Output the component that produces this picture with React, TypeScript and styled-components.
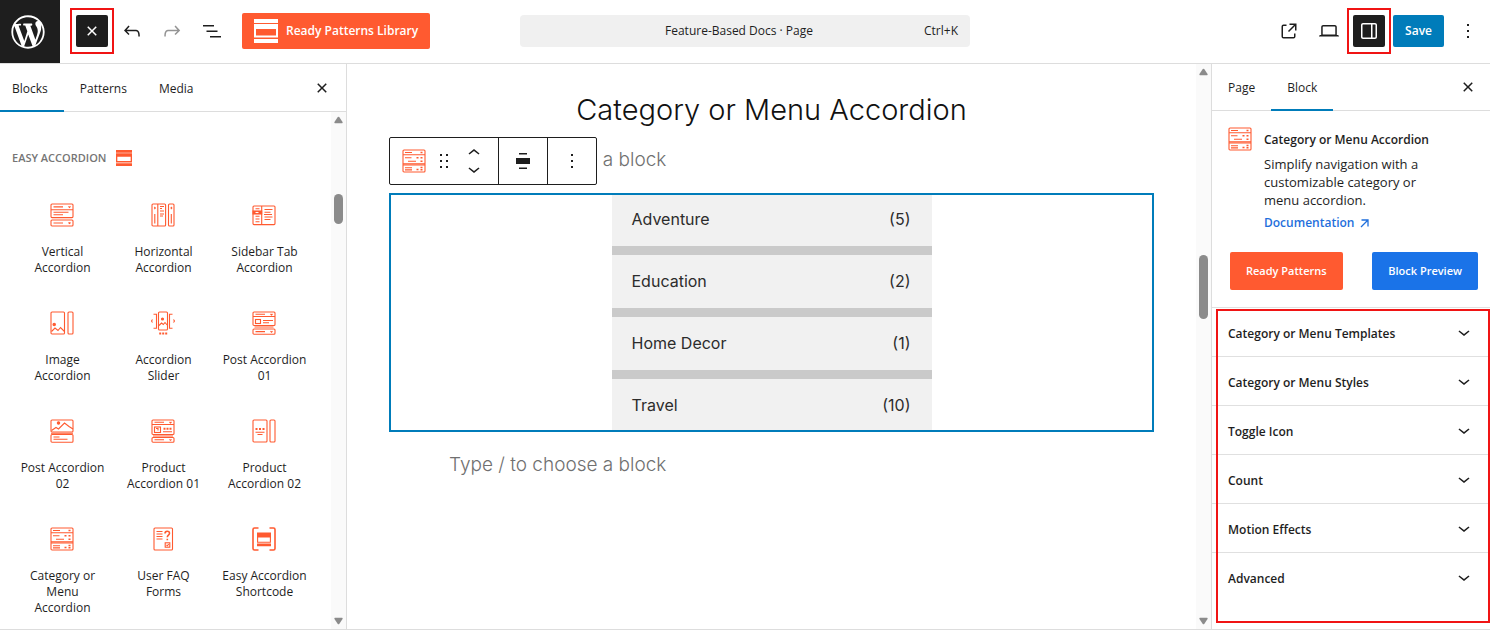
import React from 'react';
import styled, { createGlobalStyle } from 'styled-components';

const ORANGE = '#ff5a30';
const BLUE = '#007cba';
const INK = '#1e1e1e';
const LINE = '#dddddd';
const RED = '#f01414';

const GlobalStyle = createGlobalStyle`
  *, *::before, *::after { box-sizing: border-box; }
  body {
    margin: 0;
    background: #fff;
    color: ${INK};
    font-family: 'Open Sans', 'Noto Sans', sans-serif;
    font-size: 12px;
    line-height: 16px;
  }
  button { font: inherit; color: inherit; background: none; border: 0; padding: 0; cursor: pointer; }
  h1, h2, h3, p, ul { margin: 0; padding: 0; }
  ul { list-style: none; }
  svg { display: block; flex: none; }
`;

/* ---------- icons ---------- */

const GLYPHS = {
  close:
    'M12 13.06l3.712 3.713 1.061-1.06L13.061 12l3.712-3.712-1.06-1.06L12 10.938 8.288 7.227l-1.061 1.06L10.939 12l-3.712 3.712 1.06 1.061L12 13.061z',
  undo:
    'M18.3 11.7c-.6-.6-1.4-.9-2.3-.9H6.7l2.9-3.3-1.1-1-4.5 5L8.5 16l1-1-2.7-2.7H16c.5 0 .9.2 1.3.5 1 1 1 3.4 1 4.5v.3h1.5v-.2c0-1.5 0-4.3-1.5-5.7z',
  redo:
    'M15.6 6.5l-1.1 1 2.9 3.3H8c-.9 0-1.7.3-2.3.9-1.4 1.5-1.4 4.2-1.4 5.6v.2h1.5v-.3c0-1.1 0-3.5 1-4.5.3-.3.7-.5 1.3-.5h9.2L14.5 15l1.1 1.1 4.6-4.6-4.6-5z',
  listView: 'M3 6h11v1.5H3V6Zm3.5 5.5h11V13h-11v-1.5ZM21 17H10v1.5h11V17Z',
  external:
    'M19.5 4.5h-7V6h4.44l-5.97 5.97 1.06 1.06L18 7.06v4.44h1.5v-7Zm-13 1a2 2 0 0 0-2 2v10a2 2 0 0 0 2 2h10a2 2 0 0 0 2-2v-3H17v3a.5.5 0 0 1-.5.5h-10a.5.5 0 0 1-.5-.5v-10a.5.5 0 0 1 .5-.5h3V5.5h-3Z',
  desktop:
    'M20.5 16h-.7V8c0-1.1-.9-2-2-2H6.2c-1.1 0-2 .9-2 2v8h-.7c-.8 0-1.5.7-1.5 1.5h20c0-.8-.7-1.5-1.5-1.5zM5.7 8c0-.3.2-.5.5-.5h11.6c.3 0 .5.2.5.5v7.6H5.7V8z',
  drawer:
    'M18 4H6c-1.1 0-2 .9-2 2v12c0 1.1.9 2 2 2h12c1.1 0 2-.9 2-2V6c0-1.1-.9-2-2-2zm-4 14.5H6c-.3 0-.5-.2-.5-.5V6c0-.3.2-.5.5-.5h8v13zm4.5-.5c0 .3-.2.5-.5.5h-2.5v-13H18c.3 0 .5.2.5.5v12z',
  more: 'M13 19h-2v-2h2v2zm0-6h-2v-2h2v2zm0-6h-2V5h2v2z',
  chevronDown: 'M17.5 11.6L12 16l-5.5-4.4.9-1.2L12 14l4.5-3.6 1 1.2z',
  chevronUp: 'M6.5 12.4L12 8l5.5 4.4-.9 1.2L12 10l-4.5 3.6-1-1.2z',
  drag:
    'M8 7h2V5H8v2zm0 6h2v-2H8v2zm0 6h2v-2H8v2zm6-14v2h2V5h-2zm0 8h2v-2h-2v2zm0 6h2v-2h-2v2z',
  align: 'M8 4h8v1.5H8zM5 9h14v6H5zM8 18.500h8V20H8z',
};

const Glyph = ({ name }: { name: keyof typeof GLYPHS }) => (
  <svg width="24" height="24" viewBox="0 0 24 24" fill="currentColor" aria-hidden="true">
    <path d={GLYPHS[name]} />
  </svg>
);

const WordPressLogo = () => (
  <svg width="40" height="40" viewBox="-2 -2 24 24" fill="#fff" aria-hidden="true">
    <path d="M20 10c0-5.51-4.49-10-10-10C4.48 0 0 4.49 0 10c0 5.52 4.48 10 10 10 5.51 0 10-4.48 10-10zM7.78 15.37L4.37 6.22c.55-.02 1.17-.08 1.17-.08.5-.06.44-1.13-.06-1.11 0 0-1.45.11-2.37.11-.18 0-.37 0-.58-.01C4.12 2.69 6.87 1.11 10 1.11c2.33 0 4.45.87 6.05 2.34-.68-.11-1.65.39-1.65 1.58 0 .74.45 1.36.9 2.1.35.61.55 1.36.55 2.46 0 1.49-1.4 5-1.4 5l-3.03-8.37c.54-.02.82-.17.82-.17.5-.05.44-1.25-.06-1.22 0 0-1.44.12-2.38.12-.87 0-2.33-.12-2.33-.12-.5-.03-.56 1.2-.06 1.22l.92.08 1.26 3.41zM17.41 10c.24-.64.74-1.87.43-4.25.7 1.29 1.05 2.71 1.05 4.25 0 3.29-1.73 6.24-4.4 7.78.97-2.59 1.94-5.2 2.92-7.78zM6.1 18.09C3.12 16.65 1.11 13.53 1.11 10c0-1.3.23-2.48.72-3.59C3.25 10.3 4.67 14.2 6.1 18.09zm4.03-6.63l2.58 6.98c-.86.29-1.76.45-2.71.45-.79 0-1.57-.11-2.29-.33.81-2.38 1.62-4.74 2.42-7.1z" />
  </svg>
);

/* Two solid bars around a framed band. */
const BrandMark = ({ size }: { size: number }) => (
  <svg width={size} height={size} viewBox="0 0 24 24" fill="currentColor" aria-hidden="true">
    <path d="M0 0h24v4H0zM0 20h24v4H0z" />
    <path fillRule="evenodd" d="M0 5h24v13.6H0zM2 10v6.6h20V10z" />
  </svg>
);

const ART: Record<string, React.ReactNode> = {
  vertical: (
    <>
      <rect x="1" y="1" width="22" height="13.6" rx="1" />
      <path d="M1 6.8h22M3.5 3.9H13M3.5 9.3h15M3.5 11.8H13M18.5 3.4l1 1 1-1" />
      <rect x="1" y="17" width="22" height="6" rx="1" />
      <path d="M3.5 20H13M18.5 19.5l1 1 1-1" />
    </>
  ),
  horizontal: (
    <>
      <rect x="1" y="1" width="13.6" height="22" rx="1" />
      <path d="M6.8 1v22M3.8 11v9.5M9 3.5h4M9 5.5h2M9 8h4M9 11h4M9 13h3M3.3 4l1 1-1 1" />
      <rect x="17.5" y="1" width="5.5" height="22" rx="1" />
      <path d="M20.3 11v9.5M19.8 4l1 1-1 1" />
    </>
  ),
  sidebar: (
    <>
      <rect x="1" y="3" width="22" height="18.6" rx="1" />
      <path d="M9.7 3v18.6M3.5 5.8h4M3.5 13.2h4M3.5 16h4M3.5 18.8h4M12.5 6.5h8M12.5 9.2h6M12.5 14h8M12.5 16.5h6M12 11.5h8" />
      <rect x="1" y="8" width="8.7" height="3" fill={ORANGE} />
      <path d="M3.5 9.5h3" stroke="#fff" />
    </>
  ),
  image: (
    <>
      <rect x="1" y="1" width="13.5" height="22" rx="1" />
      <rect x="18" y="1" width="5" height="22" rx="1" />
      <path d="M1.5 20.5L5 17l3 2.500 2.500-3 4 4" />
      <circle cx="4.2" cy="13.5" r="1.2" fill={ORANGE} />
    </>
  ),
  slider: (
    <>
      <rect x="7.5" y="1" width="9" height="18" rx="1" />
      <path d="M8 14.5l2.5-2.5 1.8 1.5 1.7-2 2.2 2.5M2.5 3.2h3v14h-3M21.5 3.2h-3v14h3M1.5 8.5l-1 1.5 1 1.5M22.5 8.5l1 1.5-1 1.5" />
      <circle cx="11.5" cy="8" r="1" fill={ORANGE} />
      <path d="M8.2 22.5h2M11.2 22.5h2M14.2 22.5h2" strokeWidth="2" />
    </>
  ),
  post1: (
    <>
      <rect x="1" y="1" width="22" height="13.5" rx="1" />
      <path d="M1 5.5h22M3.5 3.3H13M18.5 3l1 1 1-1M11 9.5h10M11 11.8h6M2.5 16h19" />
      <rect x="3.5" y="8.5" width="5" height="4" />
      <rect x="1" y="18" width="22" height="5.2" rx="1" />
      <path d="M3.5 20.6H13M18.5 20.2l1 1 1-1" />
    </>
  ),
  post2: (
    <>
      <rect x="1" y="1" width="22" height="12" rx="1" />
      <path d="M1.5 11.5L6 8.5 8.5 10l6-6L19 7.5l4 2.500M1 14.3h22" />
      <circle cx="8.5" cy="4" r="1.2" fill={ORANGE} />
      <rect x="1" y="15.5" width="22" height="7.7" rx="1" />
      <path d="M3.5 18h6M3.5 20.2h14" />
    </>
  ),
  product1: (
    <>
      <rect x="1" y="1" width="22" height="14.5" rx="1" />
      <path d="M1 5.5h22M3.5 3.3H13M18.5 3l1 1 1-1M12 12.8h9M2 17h20" />
      <path d="M12.5 9.8h2M15.5 9.8h2M18.5 9.8h2" strokeWidth="2" />
      <rect x="3.5" y="8" width="6" height="5.5" />
      <path d="M5 9.5h2v2" />
      <rect x="1" y="18.5" width="22" height="4.7" rx="1" />
      <path d="M3.5 20.8H13M18.5 20.3l1 1 1-1" />
    </>
  ),
  product2: (
    <>
      <rect x="1" y="1" width="14" height="22" rx="1" />
      <rect x="18" y="1" width="5" height="22" rx="1" />
      <path d="M3.5 13.2h9M5.5 15.5h5" />
      <path d="M3.5 10h2M7 10h2M10.5 10h2" strokeWidth="2" />
    </>
  ),
  category: (
    <>
      <rect x="1" y="1" width="22" height="22" rx="1" />
      <path d="M1 5.8h22M1 14.8h22M1 16h22" />
      <path d="M3 3.5h7M3 8.8h6.5M6 12.2h8M3 18.7h7M3 20.9h7" />
      <path d="M14.5 8.8h2M18.5 8.8h2M18.5 12.2h2M18.5 3.5h2M14.5 20.5h2M18.5 18.5h2M18.5 20.8h2" strokeWidth="1.5" />
    </>
  ),
  faq: (
    <>
      <rect x="3" y="1" width="18.5" height="22" rx="1" />
      <path d="M5.5 4.5h6M5.5 7h6M5.5 9.5h6M5.5 12h6" />
      <path d="M14 6.5c0-3 4.5-3 4.5-.3 0 2-2.2 1.8-2.2 4M16.3 11.8v1.4" strokeWidth="1.6" />
      <rect x="14.2" y="15.8" width="4.6" height="4.4" />
      <path d="M15.5 18l.8.8 1.4-1.6" />
    </>
  ),
  shortcode: (
    <>
      <path d="M6.5 1h-4Q1 1 1 2.500v19Q1 23 2.500 23h4M17.500 1h4Q23 1 23 2.500v19q0 1.500-1.500 1.500h-4" strokeWidth="1.6" />
      <path d="M5 5.5h14v5H5zM5 16.5h14v2.700H5z" fill={ORANGE} stroke="none" />
      <path d="M5.6 10v5.2h12.8V10" />
    </>
  ),
};

const BlockArt = ({ kind }: { kind: string }) => (
  <svg width="24" height="24" viewBox="0 0 24 24" fill="none" stroke={ORANGE} strokeWidth="1.1" aria-hidden="true">
    {ART[kind]}
  </svg>
);

/* ---------- shared pieces ---------- */

const IconButton = styled.button<{ $dark?: boolean; $muted?: boolean }>`
  display: flex;
  align-items: center;
  justify-content: center;
  width: 32px;
  height: 32px;
  border-radius: 2px;
  background: ${(p) => (p.$dark ? INK : 'transparent')};
  color: ${(p) => (p.$dark ? '#fff' : p.$muted ? '#949494' : INK)};
`;

const Callout = styled.div`
  position: relative;
  &::after {
    content: '';
    position: absolute;
    inset: -7px -6px;
    border: 2px solid ${RED};
    pointer-events: none;
  }
`;

const Tabs = styled.div<{ $height: number }>`
  display: flex;
  align-items: stretch;
  height: ${(p) => p.$height}px;
  flex: none;
  border-bottom: 1px solid ${LINE};
  padding-right: 8px;
`;

const Tab = styled.button<{ $active?: boolean }>`
  position: relative;
  padding: 2px 16px 0;
  &:first-child { padding-left: 12px; }
  &::after {
    content: '';
    position: absolute;
    inset: auto 0 -1px 0;
    height: 2px;
    background: ${(p) => (p.$active ? BLUE : 'transparent')};
  }
`;

const TabClose = styled(IconButton)`
  align-self: center;
  margin-left: auto;
`;

const Track = styled.div`
  display: flex;
  flex-direction: column;
  align-items: center;
  flex: none;
  width: 15px;
  padding: 4px 0;
  background: #fafafa;
  color: #8b8b8b;
`;

const Rail = styled.div`
  flex: 1;
  width: 9px;
`;

const Thumb = styled.div`
  width: 9px;
  border-radius: 5px;
  background: #8b8b8b;
`;

const Scrollbar = ({ start, size }: { start: number; size: number }) => (
  <Track aria-hidden="true">
    <svg width="9" height="8" viewBox="0 0 10 8" fill="currentColor">
      <path d="M4.2.8Q5 0 5.800.8L9.500 6.200Q10 7.500 8.800 7.500H1.200Q0 7.500.5 6.200z" />
    </svg>
    <Rail>
      <Thumb style={{ marginTop: start, height: size }} />
    </Rail>
    <svg width="9" height="8" viewBox="0 0 10 8" fill="currentColor">
      <path d="M4.2 7.200Q5 8 5.800 7.200L9.500 1.800Q10 .5 8.800.5H1.200Q0 .5.5 1.800z" />
    </svg>
  </Track>
);

/* ---------- top bar ---------- */

const Shell = styled.div`
  display: flex;
  flex-direction: column;
  height: 100vh;
  padding-bottom: 1px;
`;

const TopBar = styled.header`
  display: grid;
  grid-template-columns: 1fr 450px 1fr;
  flex: none;
  height: 64px;
  border-bottom: 1px solid ${LINE};
`;

const BarSide = styled.div<{ $end?: boolean }>`
  display: flex;
  align-items: center;
  justify-content: ${(p) => (p.$end ? 'flex-end' : 'flex-start')};
  gap: 8px;
  height: 62px;
  padding-right: ${(p) => (p.$end ? '6px' : '0')};
`;

const HomeLink = styled.a`
  display: flex;
  align-items: center;
  align-self: flex-start;
  flex: none;
  width: 60px;
  height: 63px;
  margin-right: 8px;
  padding-left: 8px;
  background: ${INK};
`;

const LibraryButton = styled.button`
  display: flex;
  align-items: center;
  gap: 8px;
  height: 36px;
  margin-left: 6px;
  padding: 0 12px;
  border-radius: 2px;
  background: ${ORANGE};
  color: #fff;
  font-weight: 600;
  white-space: nowrap;
`;

const CommandButton = styled.button`
  display: flex;
  align-items: center;
  height: 32px;
  margin-top: 15px;
  padding-right: 12px;
  border-radius: 4px;
  background: #f0f0f0;
  &::before { content: ''; flex: 1; }
`;

const Shortcut = styled.span`
  flex: 1;
  text-align: right;
`;

const SaveButton = styled.button`
  height: 32px;
  padding: 0 12px;
  border-radius: 2px;
  background: ${BLUE};
  color: #fff;
  font-weight: 600;
`;

/* ---------- inserter ---------- */

const Body = styled.div`
  display: flex;
  flex: 1;
  min-height: 0;
  border-bottom: 1px solid ${LINE};
`;

const Inserter = styled.aside`
  display: flex;
  flex-direction: column;
  flex: none;
  width: 347px;
  border-right: 1px solid ${LINE};
`;

const Scroller = styled.div`
  display: flex;
  flex: 1;
  min-height: 0;
`;

const BlockList = styled.div`
  flex: 1;
  padding: 38px 16px 0 12px;
  overflow: hidden;
`;

const GroupTitle = styled.h2`
  display: flex;
  align-items: center;
  gap: 10px;
  margin-bottom: 25px;
  color: #757575;
  font-size: 11px;
  font-weight: 600;
  line-height: 16px;
  text-transform: uppercase;
  svg { color: ${ORANGE}; }
`;

const BlockGrid = styled.ul`
  display: grid;
  grid-template-columns: repeat(3, 101px);
  row-gap: 11px;
`;

const BlockItem = styled.button`
  display: flex;
  flex-direction: column;
  align-items: center;
  gap: 17px;
  width: 100%;
  padding: 12px 4px;
  white-space: pre-line;
  text-align: center;
  svg { margin-right: 1px; }
`;

const BLOCKS = [
  ['vertical', 'Vertical\nAccordion'],
  ['horizontal', 'Horizontal\nAccordion'],
  ['sidebar', 'Sidebar Tab\nAccordion'],
  ['image', 'Image\nAccordion'],
  ['slider', 'Accordion\nSlider'],
  ['post1', 'Post Accordion\n01'],
  ['post2', 'Post Accordion\n02'],
  ['product1', 'Product\nAccordion 01'],
  ['product2', 'Product\nAccordion 02'],
  ['category', 'Category or\nMenu\nAccordion'],
  ['faq', 'User FAQ\nForms'],
  ['shortcode', 'Easy Accordion\nShortcode'],
];

/* ---------- canvas ---------- */

const Canvas = styled.main`
  display: flex;
  flex: 1;
  min-width: 0;
`;

const Page = styled.div`
  flex: 1;
  display: flex;
  flex-direction: column;
  align-items: center;
  padding: 26px 42px 0;
  font-family: Inter, sans-serif;
`;

const PageTitle = styled.h1`
  margin-bottom: 15px;
  color: #111;
  font-size: 29px;
  font-weight: 300;
  line-height: 40px;
`;

const Prompt = styled.p`
  width: 100%;
  max-width: 645px;
  color: #707070;
  font-size: 19px;
  font-weight: 300;
  line-height: 30px;
`;

const SelectedBlock = styled.section`
  position: relative;
  display: flex;
  justify-content: center;
  width: 100%;
  max-width: 765px;
  margin: 18px 0;
  outline: 2px solid ${BLUE};
  outline-offset: -2px;
`;

const Categories = styled.ul`
  display: flex;
  flex-direction: column;
  gap: 9px;
  width: 320px;
  background: #cacaca;
`;

const Category = styled.li`
  display: flex;
  justify-content: space-between;
  padding: 16px 21px 16px 20px;
  background: #f1f1f1;
  color: #2c2c2c;
  font-size: 16px;
  line-height: 21px;
`;

const BlockToolbar = styled.div`
  position: absolute;
  left: 0;
  bottom: calc(100% + 8px);
  display: flex;
  height: 48px;
  border: 1px solid ${INK};
  border-radius: 2px;
  background: #fff;
`;

const ToolGroup = styled.div`
  display: flex;
  align-items: center;
  justify-content: center;
  min-width: 49px;
  & + & { border-left: 1px solid ${INK}; }
  &:first-child { gap: 6px; padding: 0 12px; }
`;

const ToolButton = styled.button`
  display: flex;
  justify-content: center;
  width: 24px;
`;

const Movers = styled.div`
  display: flex;
  flex-direction: column;
  button { height: 16px; display: flex; align-items: center; }
`;

const CATEGORIES = [
  ['Adventure', 5],
  ['Education', 2],
  ['Home Decor', 1],
  ['Travel', 10],
];

/* ---------- inspector ---------- */

const Inspector = styled.aside`
  display: flex;
  flex-direction: column;
  flex: none;
  width: 279px;
  border-left: 1px solid ${LINE};
  ${Tabs} { padding-right: 6px; }
  ${Tab}:first-child { padding-left: 16px; }
`;

const Card = styled.div`
  display: flex;
  gap: 12px;
  padding: 16px 16px 0;
`;

const CardText = styled.div`
  display: flex;
  flex-direction: column;
  padding-top: 3px;
`;

const CardTitle = styled.h2`
  font-size: 12px;
  font-weight: 600;
  line-height: 20px;
  white-space: nowrap;
`;

const CardCopy = styled.p`
  max-width: 160px;
  margin: 5px 0 6px;
  font-size: 13px;
  line-height: 18px;
`;

const DocLink = styled.a`
  display: flex;
  align-items: center;
  gap: 6px;
  color: #1f6fdc;
  font-weight: 600;
  text-decoration: none;
`;

const Actions = styled.div`
  display: flex;
  justify-content: space-between;
  padding: 21px 12px 17px 18px;
`;

const ActionButton = styled.button<{ $tone: string }>`
  height: 38px;
  padding: 0 16px;
  border-radius: 2px;
  background: ${(p) => p.$tone};
  color: #fff;
  font-size: 11px;
  font-weight: 600;
  white-space: nowrap;
`;

const Panels = styled.div`
  position: relative;
  &::after {
    content: '';
    position: absolute;
    inset: 2px 0 -22px 4px;
    border: 2px solid ${RED};
    pointer-events: none;
  }
`;

const PanelToggle = styled.button`
  display: flex;
  align-items: center;
  justify-content: space-between;
  width: 100%;
  height: 49px;
  padding: 0 14px 0 16px;
  border-top: 1px solid #e0e0e0;
  font-weight: 600;
  span { padding-top: 3px; }
`;

const PANELS = [
  'Category or Menu Templates',
  'Category or Menu Styles',
  'Toggle Icon',
  'Count',
  'Motion Effects',
  'Advanced',
];

export default function App() {
  return (
    <Shell>
      <GlobalStyle />
      <TopBar>
        <BarSide>
          <HomeLink href="#" aria-label="View pages">
            <WordPressLogo />
          </HomeLink>
          <Callout>
            <IconButton $dark aria-label="Close block inserter">
              <Glyph name="close" />
            </IconButton>
          </Callout>
          <IconButton aria-label="Undo"><Glyph name="undo" /></IconButton>
          <IconButton $muted aria-label="Redo"><Glyph name="redo" /></IconButton>
          <IconButton aria-label="Document overview"><Glyph name="listView" /></IconButton>
          <LibraryButton>
            <BrandMark size={24} />
            Ready Patterns Library
          </LibraryButton>
        </BarSide>
        <CommandButton>
          <span>Feature-Based Docs · Page</span>
          <Shortcut>Ctrl+K</Shortcut>
        </CommandButton>
        <BarSide $end>
          <IconButton aria-label="View page"><Glyph name="external" /></IconButton>
          <IconButton aria-label="Preview"><Glyph name="desktop" /></IconButton>
          <Callout>
            <IconButton $dark aria-label="Settings"><Glyph name="drawer" /></IconButton>
          </Callout>
          <SaveButton>Save</SaveButton>
          <IconButton aria-label="Options"><Glyph name="more" /></IconButton>
        </BarSide>
      </TopBar>

      <Body>
        <Inserter>
          <Tabs $height={48}>
            <Tab $active>Blocks</Tab>
            <Tab>Patterns</Tab>
            <Tab>Media</Tab>
            <TabClose aria-label="Close"><Glyph name="close" /></TabClose>
          </Tabs>
          <Scroller>
            <BlockList>
              <GroupTitle>
                Easy Accordion
                <BrandMark size={16} />
              </GroupTitle>
              <BlockGrid>
                {BLOCKS.map(([kind, label]) => (
                  <li key={kind}>
                    <BlockItem>
                      <BlockArt kind={kind} />
                      {label}
                    </BlockItem>
                  </li>
                ))}
              </BlockGrid>
            </BlockList>
            <Scrollbar start={70} size={30} />
          </Scroller>
        </Inserter>

        <Canvas>
          <Page>
            <PageTitle>Category or Menu Accordion</PageTitle>
            <Prompt>Type / to choose a block</Prompt>
            <SelectedBlock>
              <BlockToolbar>
                <ToolGroup>
                  <ToolButton aria-label="Category or Menu Accordion"><BlockArt kind="category" /></ToolButton>
                  <ToolButton aria-label="Drag"><Glyph name="drag" /></ToolButton>
                  <Movers>
                    <ToolButton aria-label="Move up"><Glyph name="chevronUp" /></ToolButton>
                    <ToolButton aria-label="Move down"><Glyph name="chevronDown" /></ToolButton>
                  </Movers>
                </ToolGroup>
                <ToolGroup>
                  <ToolButton aria-label="Align"><Glyph name="align" /></ToolButton>
                </ToolGroup>
                <ToolGroup>
                  <ToolButton aria-label="Options"><Glyph name="more" /></ToolButton>
                </ToolGroup>
              </BlockToolbar>
              <Categories>
                {CATEGORIES.map(([name, count]) => (
                  <Category key={name}>
                    <span>{name}</span>
                    <span>({count})</span>
                  </Category>
                ))}
              </Categories>
            </SelectedBlock>
            <Prompt>Type / to choose a block</Prompt>
          </Page>
          <Scrollbar start={179} size={64} />
        </Canvas>

        <Inspector>
          <Tabs $height={47}>
            <Tab>Page</Tab>
            <Tab $active>Block</Tab>
            <TabClose aria-label="Close settings"><Glyph name="close" /></TabClose>
          </Tabs>
          <Card>
            <BlockArt kind="category" />
            <CardText>
              <CardTitle>Category or Menu Accordion</CardTitle>
              <CardCopy>Simplify navigation with a customizable category or menu accordion.</CardCopy>
              <DocLink href="#">
                Documentation
                <svg width="9" height="9" viewBox="0 0 9 9" fill="none" stroke="currentColor" strokeWidth="1.3" aria-hidden="true">
                  <path d="M1 8l7-7M1.500 1H8v6.500" />
                </svg>
              </DocLink>
            </CardText>
          </Card>
          <Actions>
            <ActionButton $tone={ORANGE}>Ready Patterns</ActionButton>
            <ActionButton $tone="#1a73e8">Block Preview</ActionButton>
          </Actions>
          <Panels>
            {PANELS.map((name) => (
              <PanelToggle key={name} aria-expanded="false">
                <span>{name}</span>
                <Glyph name="chevronDown" />
              </PanelToggle>
            ))}
          </Panels>
        </Inspector>
      </Body>
    </Shell>
  );
}
